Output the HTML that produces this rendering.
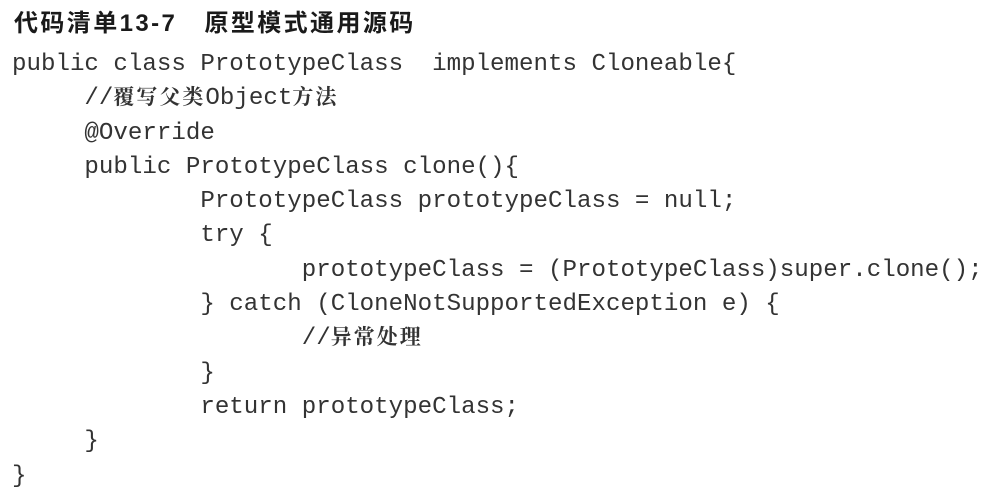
<!DOCTYPE html>
<html><head><meta charset="utf-8"><style>
html,body{margin:0;padding:0;background:#fff;width:994px;height:485px;overflow:hidden}
.t{position:absolute;left:14px;top:3px;font:bold 24px "Liberation Sans","Noto Sans CJK SC",sans-serif;color:#1a1a1a;white-space:pre;letter-spacing:2.4px}
pre{position:absolute;left:12px;top:48px;margin:0;font-family:"Liberation Mono","Noto Serif CJK SC",monospace;font-size:24.15px;line-height:34.3px;color:#333}
.c{font-family:"Noto Serif CJK SC",serif;font-weight:bold;font-size:21px;letter-spacing:2px;line-height:1}
</style></head><body>
<div class="t">代码清单13-7   原型模式通用源码</div>
<pre>public class PrototypeClass  implements Cloneable{
     //<span class="c">覆写父类</span>Object<span class="c">方法</span>
     @Override
     public PrototypeClass clone(){
             PrototypeClass prototypeClass = null;
             try {
                    prototypeClass = (PrototypeClass)super.clone();
             } catch (CloneNotSupportedException e) {
                    //<span class="c">异常处理</span>
             }
             return prototypeClass;
     }
}</pre>
</body></html>
